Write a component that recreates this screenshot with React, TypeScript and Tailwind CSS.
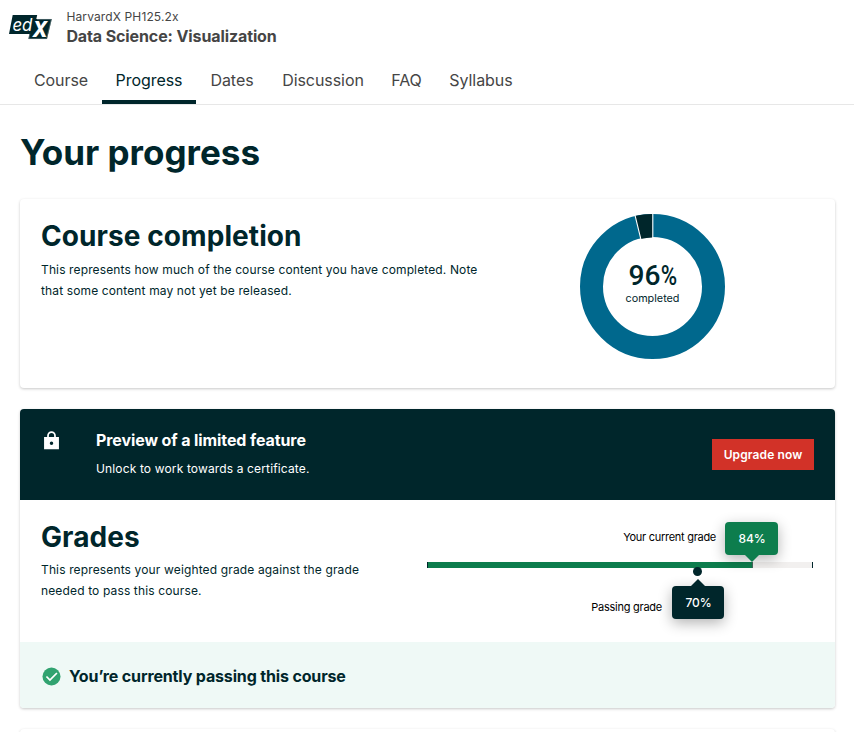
import React from "react";

const tabs = [
  { label: "Course", width: "w-[82px]" },
  { label: "Progress", width: "w-[94px]", active: true },
  { label: "Dates", width: "w-[72px]" },
  { label: "Discussion", width: "w-[110px]" },
  { label: "FAQ", width: "w-[57px]" },
  { label: "Syllabus", width: "w-[92px]" },
];

function Logo() {
  return (
    <svg width="43" height="27" viewBox="0 0 43 27" className="overflow-visible" role="img" aria-label="edX">
      <path d="M3.7 0H28.2L27.3 4H42.8L38 24H19.4L20.4 19H0Z" fill="#00262b" />
      <path d="M28 4.4H42.3L37.6 23.7H19.8L20.9 18.8" fill="none" stroke="#8a9b9e" strokeWidth=".5" />
      <text x="3.4" y="16" fill="#fff" fontFamily="Inter, sans-serif" fontSize="17.5" fontStyle="italic" textLength="20" lengthAdjust="spacingAndGlyphs">ed</text>
      <text x="23.5" y="21.6" fill="#fff" fontFamily="Inter, sans-serif" fontSize="21" fontWeight="800" fontStyle="italic" textLength="15" lengthAdjust="spacingAndGlyphs">X</text>
    </svg>
  );
}

function Header() {
  return (
    <header className="h-[105px] border-b border-[#e7e7e7] text-[#454545]">
      <div className="flex h-[57px] pl-[9px] pt-[9px]">
        <div className="w-[57.4px] pt-[6px]"><Logo /></div>
        <div>
          <div className="h-[17px] text-xs leading-4 tracking-[0.13px]">HarvardX PH125.2x</div>
          <div className="text-base font-bold leading-[21px] tracking-[-0.11px]">Data Science: Visualization</div>
        </div>
      </div>
      <nav className="flex h-[47px] pl-5">
        {tabs.map((tab) => (
          <a
            key={tab.label}
            className={`${tab.width} ${tab.active ? "border-[#00262b] text-[#00262b]" : "border-transparent"} flex h-[47px] shrink-0 items-center justify-center border-b-4 pb-px pt-[3px] text-base tracking-[-0.06px]`}
          >
            {tab.label}
          </a>
        ))}
      </nav>
    </header>
  );
}

function CompletionDonut() {
  return (
    <svg width="146" height="146" viewBox="0 0 146 146" className="shrink-0">
      <circle cx="72.5" cy="72.5" r="61" fill="none" stroke="#00688d" strokeWidth="23" />
      <path d="M72.5 0V23.5A49 49 0 0 0 60.7 25L55.1 2.1A72.5 72.5 0 0 1 72.5 0Z" fill="#00262b" />
      <path d="M72.8 0V24M55.1 1.7L60.9 25.4" stroke="#fff" strokeWidth="1.1" />
      <g fontFamily="Roboto, sans-serif" fontSize="27.5" fontWeight="500" fill="#00262b">
        <text x="48.5" y="71" textLength="32" lengthAdjust="spacingAndGlyphs">96</text>
        <text x="80.8" y="71" textLength="16.4" lengthAdjust="spacingAndGlyphs">%</text>
      </g>
      <text x="72.5" y="88" fontFamily="Inter, sans-serif" fontSize="10.8" textAnchor="middle" fill="#00262b">completed</text>
    </svg>
  );
}

function CourseCompletion() {
  return (
    <section className="flex h-[189px] rounded bg-white pl-[21px] shadow-[0_1px_3px_rgba(0,0,0,0.22)]">
      <div className="w-[539px] pt-[17px]">
        <h2 className="text-[28px] font-bold leading-10 tracking-[0.08px]">Course completion</h2>
        <p className="mt-[3px] w-[450px] text-xs leading-[21px] tracking-[0.13px]">This represents how much of the course content you have completed. Note that some content may not yet be released.</p>
      </div>
      <div className="pt-[15px]"><CompletionDonut /></div>
    </section>
  );
}

function UpgradeBanner() {
  return (
    <div className="flex h-[91px] items-center bg-[#00262b] pl-[21px] pr-[21px] text-white">
      <div className="flex h-[91px] w-[55px] pt-[21px]">
        <svg width="21" height="21" viewBox="0 0 24 24" fill="currentColor">
          <path d="M20.5 8H17V6.5a5 5 0 0 0-10 0V8H3.5v14h17ZM9 6.5a3 3 0 0 1 6 0V8H9ZM12 17a2 2 0 1 1 0-4 2 2 0 0 1 0 4Z" />
        </svg>
      </div>
      <div className="grow">
        <h3 className="text-base font-bold leading-5 tracking-[-0.1px]">Preview of a limited feature</h3>
        <p className="mt-[9px] text-xs leading-5 tracking-[0.14px]">Unlock to work towards a certificate.</p>
      </div>
      <button className="h-[31px] w-[102px] bg-[#d23228] pt-px text-xs font-semibold tracking-[0.1px]">Upgrade now</button>
    </div>
  );
}

function GradeBar() {
  return (
    <div className="relative h-full w-[386px]">
      <div className="flex h-full flex-col pt-[62px]">
        <div className="flex h-[6px] border-x border-[#00262b] bg-[#f2f0ef]">
          <div className="w-[325px] border-r border-[#45675b] bg-[#0d7d4d]" />
        </div>
      </div>
      <div className="absolute left-[266px] top-[67px] size-[9px] rounded-full bg-[#00262b]" />
      <span className="absolute right-[97px] top-[29px] whitespace-nowrap text-[11px] leading-4 tracking-[-0.28px] text-black">Your current grade</span>
      <div className="absolute left-[298px] top-[22px] flex h-[33px] w-[53px] items-center justify-center rounded bg-[#0d7d4d] pl-px pt-px text-xs font-medium tracking-[-0.1px] text-white shadow-[0_4px_14px_rgba(0,0,0,0.3)]">
        84%
        <svg className="absolute left-[20px] top-[33px]" width="14" height="7"><path d="M0 0H14L7 7Z" fill="#0d7d4d" /></svg>
      </div>
      <span className="absolute right-[151px] top-[99px] whitespace-nowrap text-[11px] leading-4 tracking-[-0.25px] text-black">Passing grade</span>
      <div className="absolute left-[245px] top-[86px] flex h-[33px] w-[52px] items-center justify-center rounded bg-[#00262b] pl-px pt-px text-xs font-medium tracking-[-0.1px] text-white shadow-[0_4px_14px_rgba(0,0,0,0.3)]">
        70%
        <svg className="absolute -top-[7px] left-[19px]" width="14" height="7"><path d="M0 7H14L7 0Z" fill="#00262b" /></svg>
      </div>
    </div>
  );
}

function Grades() {
  return (
    <section className="mt-[21px] h-[299px] overflow-hidden rounded shadow-[0_1px_3px_rgba(0,0,0,0.22)]">
      <UpgradeBanner />
      <div className="flex h-[142px] bg-white pl-[21px]">
        <div className="w-[386px] pt-[17px]">
          <h2 className="text-[28px] font-bold leading-10 tracking-[0.08px]">Grades</h2>
          <p className="mt-[2px] w-[330px] text-xs leading-[21px] tracking-[0.14px]">This represents your weighted grade against the grade needed to pass this course.</p>
        </div>
        <GradeBar />
      </div>
      <div className="flex h-[66px] items-center bg-[#eff9f6] pl-[21px] pt-[3px]">
        <svg width="21" height="21" viewBox="0 0 24 24">
          <circle cx="12" cy="12" r="10.3" fill="#31a370" />
          <path d="m6.2 12 4 4 8-8" fill="none" stroke="#fff" strokeWidth="2" />
        </svg>
        <span className="ml-[7px] pb-[2px] text-base font-bold tracking-[-0.15px]">You’re currently passing this course</span>
      </div>
    </section>
  );
}

export default function App() {
  return (
    <div className="h-[732px] overflow-hidden bg-white font-[Inter,sans-serif] text-[#00262b]">
      <Header />
      <main className="px-[20px] pr-[19px]">
        <h1 className="h-[94px] pt-[23px] text-[35px] font-bold leading-[48px]">Your progress</h1>
        <CourseCompletion />
        <Grades />
        <section className="mt-[21px] h-10 rounded bg-white shadow-[0_1px_3px_rgba(0,0,0,0.22)]" />
      </main>
    </div>
  );
}
